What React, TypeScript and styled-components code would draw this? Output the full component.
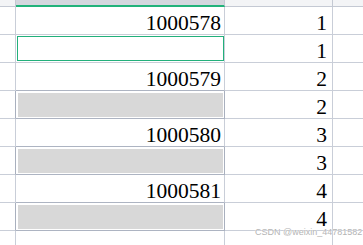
import styled, { createGlobalStyle } from 'styled-components';

type Row = {
  code?: string;
  num: string;
  kind: 'text' | 'active' | 'filled';
};

const rows: Row[] = [
  { code: '1000578', num: '1', kind: 'text' },
  { num: '1', kind: 'active' },
  { code: '1000579', num: '2', kind: 'text' },
  { num: '2', kind: 'filled' },
  { code: '1000580', num: '3', kind: 'text' },
  { num: '3', kind: 'filled' },
  { code: '1000581', num: '4', kind: 'text' },
  { num: '4', kind: 'filled' },
];

function App() {
  return (
    <>
      <GlobalStyle />
      <Page>
        <Sheet>
          <HeadCell />
          <HeadCell $selected />
          <HeadCell />
          <HeadCell $last />

          {rows.map((row, i) => {
            const strong = i >= 2;
            const filled = row.kind === 'filled';
            return [
              <RowHead key={`a${i}`} $dark={filled} />,
              <Cell key={`b${i}`} $darkBottom={strong} $darkRight={filled}>
                {row.kind === 'text' && <Value>{row.code}</Value>}
                {row.kind === 'active' && <ActiveBox />}
                {row.kind === 'filled' && <FillBox />}
              </Cell>,
              <Cell key={`c${i}`} $pad={5}>
                <Value>{row.num}</Value>
              </Cell>,
              <Cell key={`d${i}`} $last />,
            ];
          })}

          <RowHead />
          <Cell />
          <Cell />
          <Cell $last />
        </Sheet>
        <Watermark>CSDN @weixin_44781582</Watermark>
      </Page>
    </>
  );
}

const GlobalStyle = createGlobalStyle`
  html, body {
    margin: 0;
    padding: 0;
    background: #ffffff;
    overflow: hidden;
  }
`;

const Page = styled.div`
  position: relative;
  width: 363px;
  height: 245px;
  overflow: hidden;
  background: #ffffff;
`;

const Sheet = styled.div`
  display: grid;
  grid-template-columns: 16px 209px 108px 1fr;
  grid-template-rows: 7px repeat(8, 28px) 28px;
`;

const HeadCell = styled.div<{ $selected?: boolean; $last?: boolean }>`
  box-sizing: border-box;
  background: ${(p) => (p.$selected ? '#d4d7de' : '#f3f4f6')};
  border-right: ${(p) => (p.$last ? 'none' : '1px solid #c4c9d3')};
  border-bottom: ${(p) =>
    p.$selected ? '2px solid #21b27a' : '1px solid #c4c9d3'};
`;

const RowHead = styled.div<{ $dark?: boolean }>`
  box-sizing: border-box;
  border-right: 1px solid ${(p) => (p.$dark ? '#a9b0be' : '#c9ced8')};
  border-bottom: 1px solid #c9ced8;
`;

const Cell = styled.div<{
  $darkBottom?: boolean;
  $darkRight?: boolean;
  $last?: boolean;
  $pad?: number;
}>`
  box-sizing: border-box;
  display: flex;
  align-items: flex-end;
  justify-content: flex-end;
  padding-right: ${(p) => p.$pad ?? 3}px;
  border-right: ${(p) =>
    p.$last ? 'none' : `1px solid ${p.$darkRight ? '#a9b0be' : '#c9ced8'}`};
  border-bottom: 1px solid ${(p) => (p.$darkBottom ? '#adb4c2' : '#c9ced8')};
  position: relative;
`;

const Value = styled.span`
  font-family: 'Liberation Serif', 'Times New Roman', serif;
  font-size: 21.5px;
  line-height: 21.5px;
  color: #000000;
  margin-bottom: 0;
`;

const ActiveBox = styled.div`
  position: absolute;
  left: 1px;
  top: 1px;
  right: 0;
  bottom: 1px;
  border: 1px solid #22b07b;
`;

const FillBox = styled.div`
  position: absolute;
  left: 2px;
  top: 2px;
  right: 1px;
  bottom: 1px;
  background: #d8d8d8;
`;

const Watermark = styled.div`
  position: absolute;
  left: 255px;
  top: 227px;
  font-family: 'Liberation Sans', Arial, sans-serif;
  font-size: 9px;
  line-height: 10px;
  color: #b4b4b4;
  text-shadow: 0 0 1px #ffffff, 0 0 1px #ffffff;
  white-space: nowrap;
`;

export default App;
